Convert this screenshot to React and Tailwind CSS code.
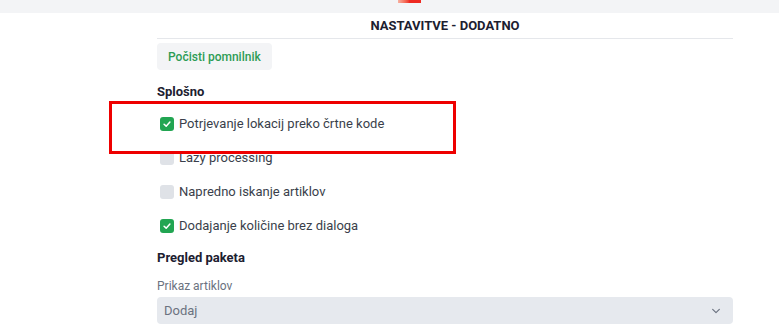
import React from "react";

function CheckRow({ checked, label, className = "" }) {
  return (
    <label className={"flex items-center gap-[5px] h-[33px] " + className}>
      <span
        className={
          "w-[14px] h-[14px] rounded-[3px] flex items-center justify-center " +
          (checked ? "bg-[#22a552]" : "bg-[#dfe2e7]")
        }
      >
        {checked && (
          <svg viewBox="0 0 12 12" className="w-[10px] h-[10px]">
            <path d="M2.5 6.3 L5 8.6 L9.5 3.6" fill="none" stroke="white" strokeWidth="1.8" strokeLinecap="round" strokeLinejoin="round" />
          </svg>
        )}
      </span>
      <span className="text-[13px] text-[#3a3f4b]">{label}</span>
    </label>
  );
}

export default function App() {
  return (
    <div className="relative w-[779px] h-[336px] bg-white overflow-hidden" style={{ fontFamily: "Roboto, 'Liberation Sans', sans-serif" }}>
      <div className="h-[13px] bg-[#f3f4f6]" />

      <div className="pl-[157px] w-[733px]">
        <div className="h-[26px] border-b border-[#e5e7eb] flex items-center justify-center">
          <h1 className="text-[13px] font-bold text-[#1c2030] pt-[1px]">NASTAVITVE - DODATNO</h1>
        </div>

        <button className="mt-[4px] h-[27px] px-[11px] rounded-[4px] bg-[#f3f4f6] text-[12px] font-medium text-[#2e9c55]">
          Počisti pomnilnik
        </button>

        <h2 className="mt-[14px] text-[13px] font-bold text-[#1c2030] leading-[16px]">Splošno</h2>

        <div className="mt-[7px] pl-[3px] flex flex-col">
          <CheckRow checked label="Potrjevanje lokacij preko črtne kode" />
          <CheckRow label="Lazy processing" className="mt-[1px]" />
          <CheckRow label="Napredno iskanje artiklov" className="mt-[1px]" />
          <CheckRow checked label="Dodajanje količine brez dialoga" className="mt-[1px]" />
        </div>

        <h2 className="mt-[8px] text-[13px] font-bold text-[#1c2030] leading-[16px]">Pregled paketa</h2>

        <div className="mt-[13px] text-[12px] text-[#6b7280] leading-[14px]">Prikaz artiklov</div>

        <div className="mt-[4px] h-[27px] rounded-[4px] bg-[#e6e9ee] flex items-center justify-between px-[7px] pr-[12px]">
          <span className="text-[13px] text-[#6b7280]">Dodaj</span>
          <svg viewBox="0 0 12 12" className="w-[10px] h-[10px]">
            <path d="M2 4 L6 8 L10 4" fill="none" stroke="#6b7280" strokeWidth="1.4" strokeLinecap="round" strokeLinejoin="round" />
          </svg>
        </div>
      </div>

      <div className="absolute left-[398px] top-0 w-[23px] h-[3px] bg-gradient-to-r from-[#f6b0a0] via-[#ee2a22] to-[#ee2a22]" />
      <div className="absolute left-[109px] top-[101px] w-[347px] h-[53px] border-[3px] border-[#ee0000]" />
    </div>
  );
}
